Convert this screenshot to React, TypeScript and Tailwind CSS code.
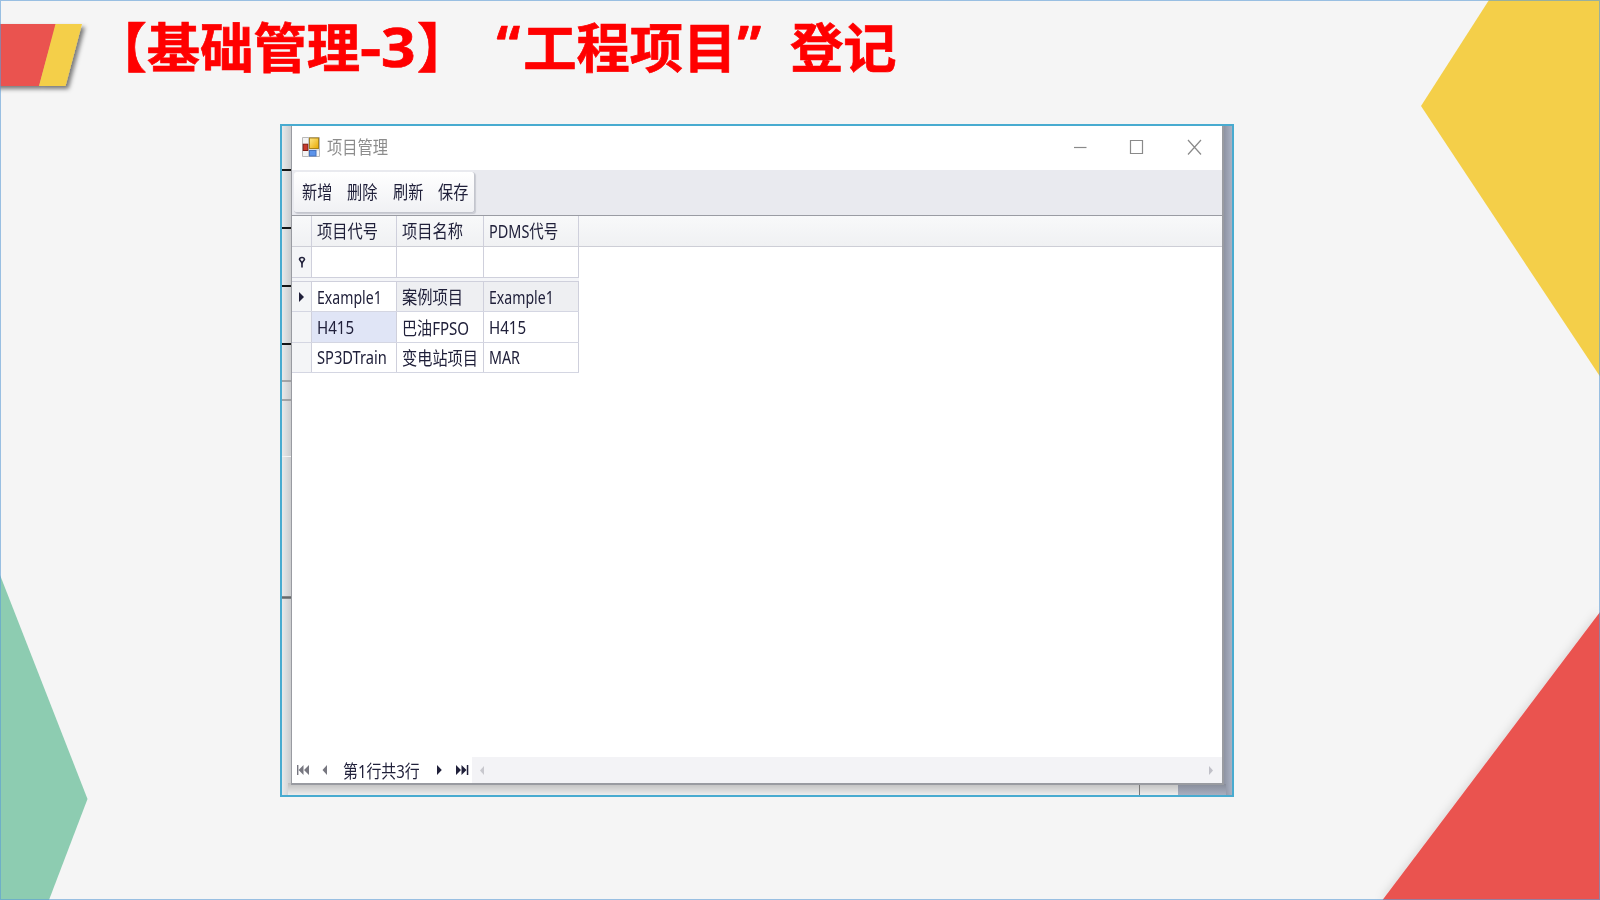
import { useLayoutEffect, useRef, useState } from "react";

const uiFont = "font-['Noto_Sans','Noto_Sans_CJK_SC',sans-serif]";

/** Text condensed (or widened) horizontally to fill a given width. */
function Fit({ text, width, className = "" }: { text: string; width: number; className?: string }) {
  const ref = useRef<HTMLSpanElement>(null);
  const [scale, setScale] = useState(1);
  useLayoutEffect(() => {
    if (ref.current) setScale(width / ref.current.offsetWidth);
  }, [width, text]);
  return (
    <span className="block shrink-0 overflow-visible" style={{ width }}>
      <span
        ref={ref}
        className={`inline-block origin-left whitespace-nowrap ${className}`}
        style={{ transform: `scaleX(${scale})` }}
      >
        {text}
      </span>
    </span>
  );
}

function Backdrop() {
  return (
    <svg className="absolute inset-0 h-full w-full" viewBox="0 0 1600 900">
      <defs>
        <filter id="soft" x="-20%" y="-20%" width="140%" height="150%">
          <feDropShadow dx="3" dy="3" stdDeviation="2" floodColor="#000" floodOpacity="0.5" />
        </filter>
        <filter id="glow" x="-20%" y="-20%" width="140%" height="140%">
          <feDropShadow dx="-1" dy="0" stdDeviation="5" floodColor="#000" floodOpacity="0.14" />
        </filter>
      </defs>
      <path d="M1489 0H1600V376.500L1421 106Z" fill="#f4cf49" />
      <path d="M0 575L87.500 799L49 900H0Z" fill="#8dccb1" />
      <path d="M1600 612V900H1382.500Z" fill="#ea5350" filter="url(#glow)" />
      <g filter="url(#soft)">
        <path d="M-10 24H56L39 86H-10Z" fill="#ea5350" />
        <path d="M55.500 24H82L65.500 86H39Z" fill="#f4cf49" />
      </g>
    </svg>
  );
}

function Heading() {
  return (
    <h1 className="flex h-[60px] items-center pl-[93.500px] font-['Noto_Sans_CJK_SC',sans-serif] text-[53.300px] leading-[60px] font-bold whitespace-nowrap text-[#ff0000] [-webkit-text-stroke:0.7px_#ff0000]">
      <span>【基础管理</span>
      <span className="flex w-[57px]">
        <Fit text="-" width={21} className="font-['Open_Sans','Noto_Sans',sans-serif]" />
        <Fit text="3" width={34} className="font-['Open_Sans','Noto_Sans',sans-serif]" />
      </span>
      <span>】</span>
      <span className="w-[53px] pr-[3px] text-right font-['Noto_Sans',sans-serif]">“</span>
      <span>工程项目</span>
      <span className="w-[53.500px] pl-[1px] font-['Noto_Sans',sans-serif]">”</span>
      <span>登记</span>
    </h1>
  );
}

function AppIcon() {
  return (
    <svg className="h-5 w-[18px] shrink-0" viewBox="0 0 18 20">
      <defs>
        <linearGradient id="gold" x1="0" y1="0" x2="1" y2="1">
          <stop offset="0" stopColor="#ffe98a" />
          <stop offset="1" stopColor="#e8a800" />
        </linearGradient>
      </defs>
      <path d="M.5 .5H17.500V19.500H.5Z" fill="#f4f4f4" stroke="#b9b9b9" />
      <path d="M6.500 .5V19.500M.5 13H17" stroke="#c9c9c9" />
      <rect x="7.500" y="1" width="9" height="10.500" fill="url(#gold)" stroke="#a8821a" />
      <rect x="1.200" y="7.200" width="4.600" height="6.300" fill="#c93a2c" stroke="#7f1d14" />
      <rect x="7.500" y="13.500" width="6.500" height="5.500" fill="#5b93ea" stroke="#4672bd" />
    </svg>
  );
}

function TitleBar() {
  return (
    <div className="flex h-[44px] shrink-0 items-center bg-white pr-[20px] pb-[2px] pl-[10px]">
      <AppIcon />
      <div className="ml-[7px] flex-1 text-[#8c8c8c]">
        <Fit text="项目管理" width={61} className="text-[18px]" />
      </div>
      <svg className="h-4 w-[128px]" viewBox="0 0 128 16" fill="none" stroke="#8a8a8a" strokeWidth="1.2">
        <path d="M0 8.500H12.500" />
        <path d="M56.500 1.500H68.500V14.500H56.500Z" />
        <path d="M114 1L127 15.500M127 1L114 15.500" />
      </svg>
    </div>
  );
}

function Toolbar() {
  return (
    <div className="h-[46px] shrink-0 border-b border-[#9a9ca3] bg-[#e9eaef] pt-[2px]">
      <div className="ml-[2px] flex h-[41px] w-[181px] items-center gap-[15px] rounded-[3px] border-r border-b border-[#c3c5cd] bg-linear-to-b from-white to-[#f0f1f4] pl-[8px] text-[#20203a] shadow-[1px_1px_1px_#c9cbd2]">
        {["新增", "删除", "刷新", "保存"].map((label) => (
          <Fit key={label} text={label} width={30.3} className="text-[18px]" />
        ))}
      </div>
    </div>
  );
}

const columns = "grid grid-cols-[20px_85px_87px_95px]";
const cell = "flex items-center border-r border-[#cfd0dc]";

function DataGrid() {
  return (
    <div className="flex-1 bg-white text-[#20203a]">
      <div className="h-[31px] border-b border-[#cdced6] bg-linear-to-b from-[#f8f9fa] to-[#f0f1f3]">
        <div className={`${columns} h-[30px]`}>
          <div className={cell} />
          <div className={`${cell} pl-[5px]`}>
            <Fit text="项目代号" width={61} className="text-[18px]" />
          </div>
          <div className={`${cell} pl-[5px]`}>
            <Fit text="项目名称" width={61} className="text-[18px]" />
          </div>
          <div className={`${cell} pl-[5px]`}>
            <Fit text="PDMS代号" width={69} className="text-[18px]" />
          </div>
        </div>
      </div>
      <div className={`${columns} h-[31px] w-[287px] border-b border-[#cfd0dc]`}>
        <div className={`${cell} justify-center bg-[#f4f5f7]`}>
          <svg className="h-3 w-2" viewBox="0 0 8 12">
            <path d="M1.500 3.500A2.500 2 0 0 1 6.500 3.500L4 7Z" fill="none" stroke="#20203a" strokeWidth="1.500" />
            <path d="M4 6V11.500" stroke="#20203a" strokeWidth="1.600" />
          </svg>
        </div>
        <div className={cell} />
        <div className={cell} />
        <div className={cell} />
      </div>
      <div className="h-[4px] w-[287px] border-b border-[#cfd0dc] bg-[#f4f5f8]" />
      <GridRow values={["Example1", "案例项目", "Example1"]} widths={[65, 61, 65]} current />
      <GridRow values={["H415", "巴油FPSO", "H415"]} widths={[37, 67, 37]} highlight />
      <GridRow values={["SP3DTrain", "变电站项目", "MAR"]} widths={[70, 76, 31]} />
    </div>
  );
}

type RowProps = { values: string[]; widths: number[]; current?: boolean; highlight?: boolean };

function GridRow({ values, widths, current, highlight }: RowProps) {
  const rest = current ? "bg-[#eeeff2]" : "bg-white";
  return (
    <div className={`${columns} h-[30.400px] w-[287px] border-b border-[#d4d6e2]`}>
      <div className={`${cell} justify-center bg-[#f4f5f7]`}>
        {current && (
          <svg className="h-[10px] w-[5px]" viewBox="0 0 5 10">
            <path d="M0 0L5 5L0 10Z" fill="#20203a" />
          </svg>
        )}
      </div>
      <div className={`${cell} pt-px pl-[5px] ${highlight ? "bg-[#e0e5f6]" : "bg-white"}`}>
        <Fit text={values[0]} width={widths[0]} className="text-[18px]" />
      </div>
      <div className={`${cell} pt-[2px] pl-[5px] ${rest}`}>
        <Fit text={values[1]} width={widths[1]} className="text-[18px]" />
      </div>
      <div className={`${cell} pt-px pl-[5px] ${rest}`}>
        <Fit text={values[2]} width={widths[2]} className="text-[18px]" />
      </div>
    </div>
  );
}

function Navigator() {
  return (
    <div className="flex h-[26px] shrink-0 items-center bg-white text-[#20203a]">
      <svg className="ml-[5px] h-[10px] w-[32px] shrink-0" viewBox="0 0 32 10" fill="#777780">
        <path d="M0 0H1.400V10H0ZM6.500 0V10L1.600 5ZM12 0V10L7 5ZM30 0V10L25.500 5Z" />
      </svg>
      <div className="ml-[14px] pt-[3px]">
        <Fit text="第1行共3行" width={77} className="text-[18px]" />
      </div>
      <svg className="ml-[17px] h-[10px] w-[32px] shrink-0" viewBox="0 0 32 10" fill="#20203a">
        <path d="M0 0L4.800 5L0 10ZM19 0L24 5L19 10ZM24.500 0L29.500 5L24.500 10ZM29.800 0H31.300V10H29.800Z" />
      </svg>
      <div className="ml-[3px] flex h-full flex-1 items-center justify-between bg-[#f3f3f6] pr-[9px] pl-[8px]">
        <svg className="h-[9px] w-[4px]" viewBox="0 0 4 9" fill="#c8c8ce">
          <path d="M4 0V9L0 4.500Z" />
        </svg>
        <svg className="h-[9px] w-[4px]" viewBox="0 0 4 9" fill="#c0c0c8">
          <path d="M0 0L4 4.500L0 9Z" />
        </svg>
      </div>
    </div>
  );
}

/** Strips of the window lying behind, visible around the dialog's edge. */
function BehindWindow() {
  return (
    <svg className="absolute inset-0 h-full w-full" viewBox="0 0 950 669">
      <defs>
        <linearGradient id="left" x1="0" x2="1">
          <stop offset="0" stopColor="#e8e9ea" />
          <stop offset="1" stopColor="#c8c9cb" />
        </linearGradient>
        <linearGradient id="right" x1="0" x2="1">
          <stop offset="0" stopColor="#8b909f" />
          <stop offset="1" stopColor="#aab1c3" />
        </linearGradient>
        <linearGradient id="below" x1="0" y1="0" x2="0" y2="1">
          <stop offset="0" stopColor="#bdbdbd" />
          <stop offset="1" stopColor="#ededed" />
        </linearGradient>
        <linearGradient id="belowRight" x1="0" y1="0" x2="0" y2="1">
          <stop offset="0" stopColor="#878c9a" />
          <stop offset="1" stopColor="#a8afc0" />
        </linearGradient>
      </defs>
      <rect width="10" height="669" fill="url(#left)" />
      <rect x="941" width="9" height="669" fill="url(#right)" />
      <rect x="6" y="657" width="890" height="12" fill="url(#below)" />
      <rect x="896" y="658" width="48" height="11" fill="url(#belowRight)" />
      <path d="M857.500 658V669" stroke="#777" />
      <path d="M0 44H10M0 102H10M0 160H10M0 218H10" stroke="#161616" strokeWidth="2" />
      <path d="M0 255H10M0 274H10" stroke="#8e9092" strokeWidth="1.500" />
      <path d="M0 330.500H10" stroke="#f3f3f3" />
      <path d="M0 471.500H10" stroke="#66686a" strokeWidth="2.500" />
    </svg>
  );
}

export default function App() {
  return (
    <main className="relative h-[900px] w-[1600px] overflow-hidden bg-[#f5f5f5]">
      <Backdrop />
      <div className="relative flex flex-col pt-[15px]">
        <Heading />
        <div className={`relative mt-[49px] ml-[280px] h-[673px] w-[954px] border-2 border-[#48abd0] pl-[9px] ${uiFont}`}>
          <BehindWindow />
          <section className="relative flex h-[659px] w-[933px] flex-col border-r-2 border-b-2 border-l border-[#999ba1]">
            <TitleBar />
            <Toolbar />
            <DataGrid />
            <Navigator />
          </section>
        </div>
      </div>
      <div className="pointer-events-none absolute inset-0 border border-[#5b9bd5]/60" />
    </main>
  );
}
